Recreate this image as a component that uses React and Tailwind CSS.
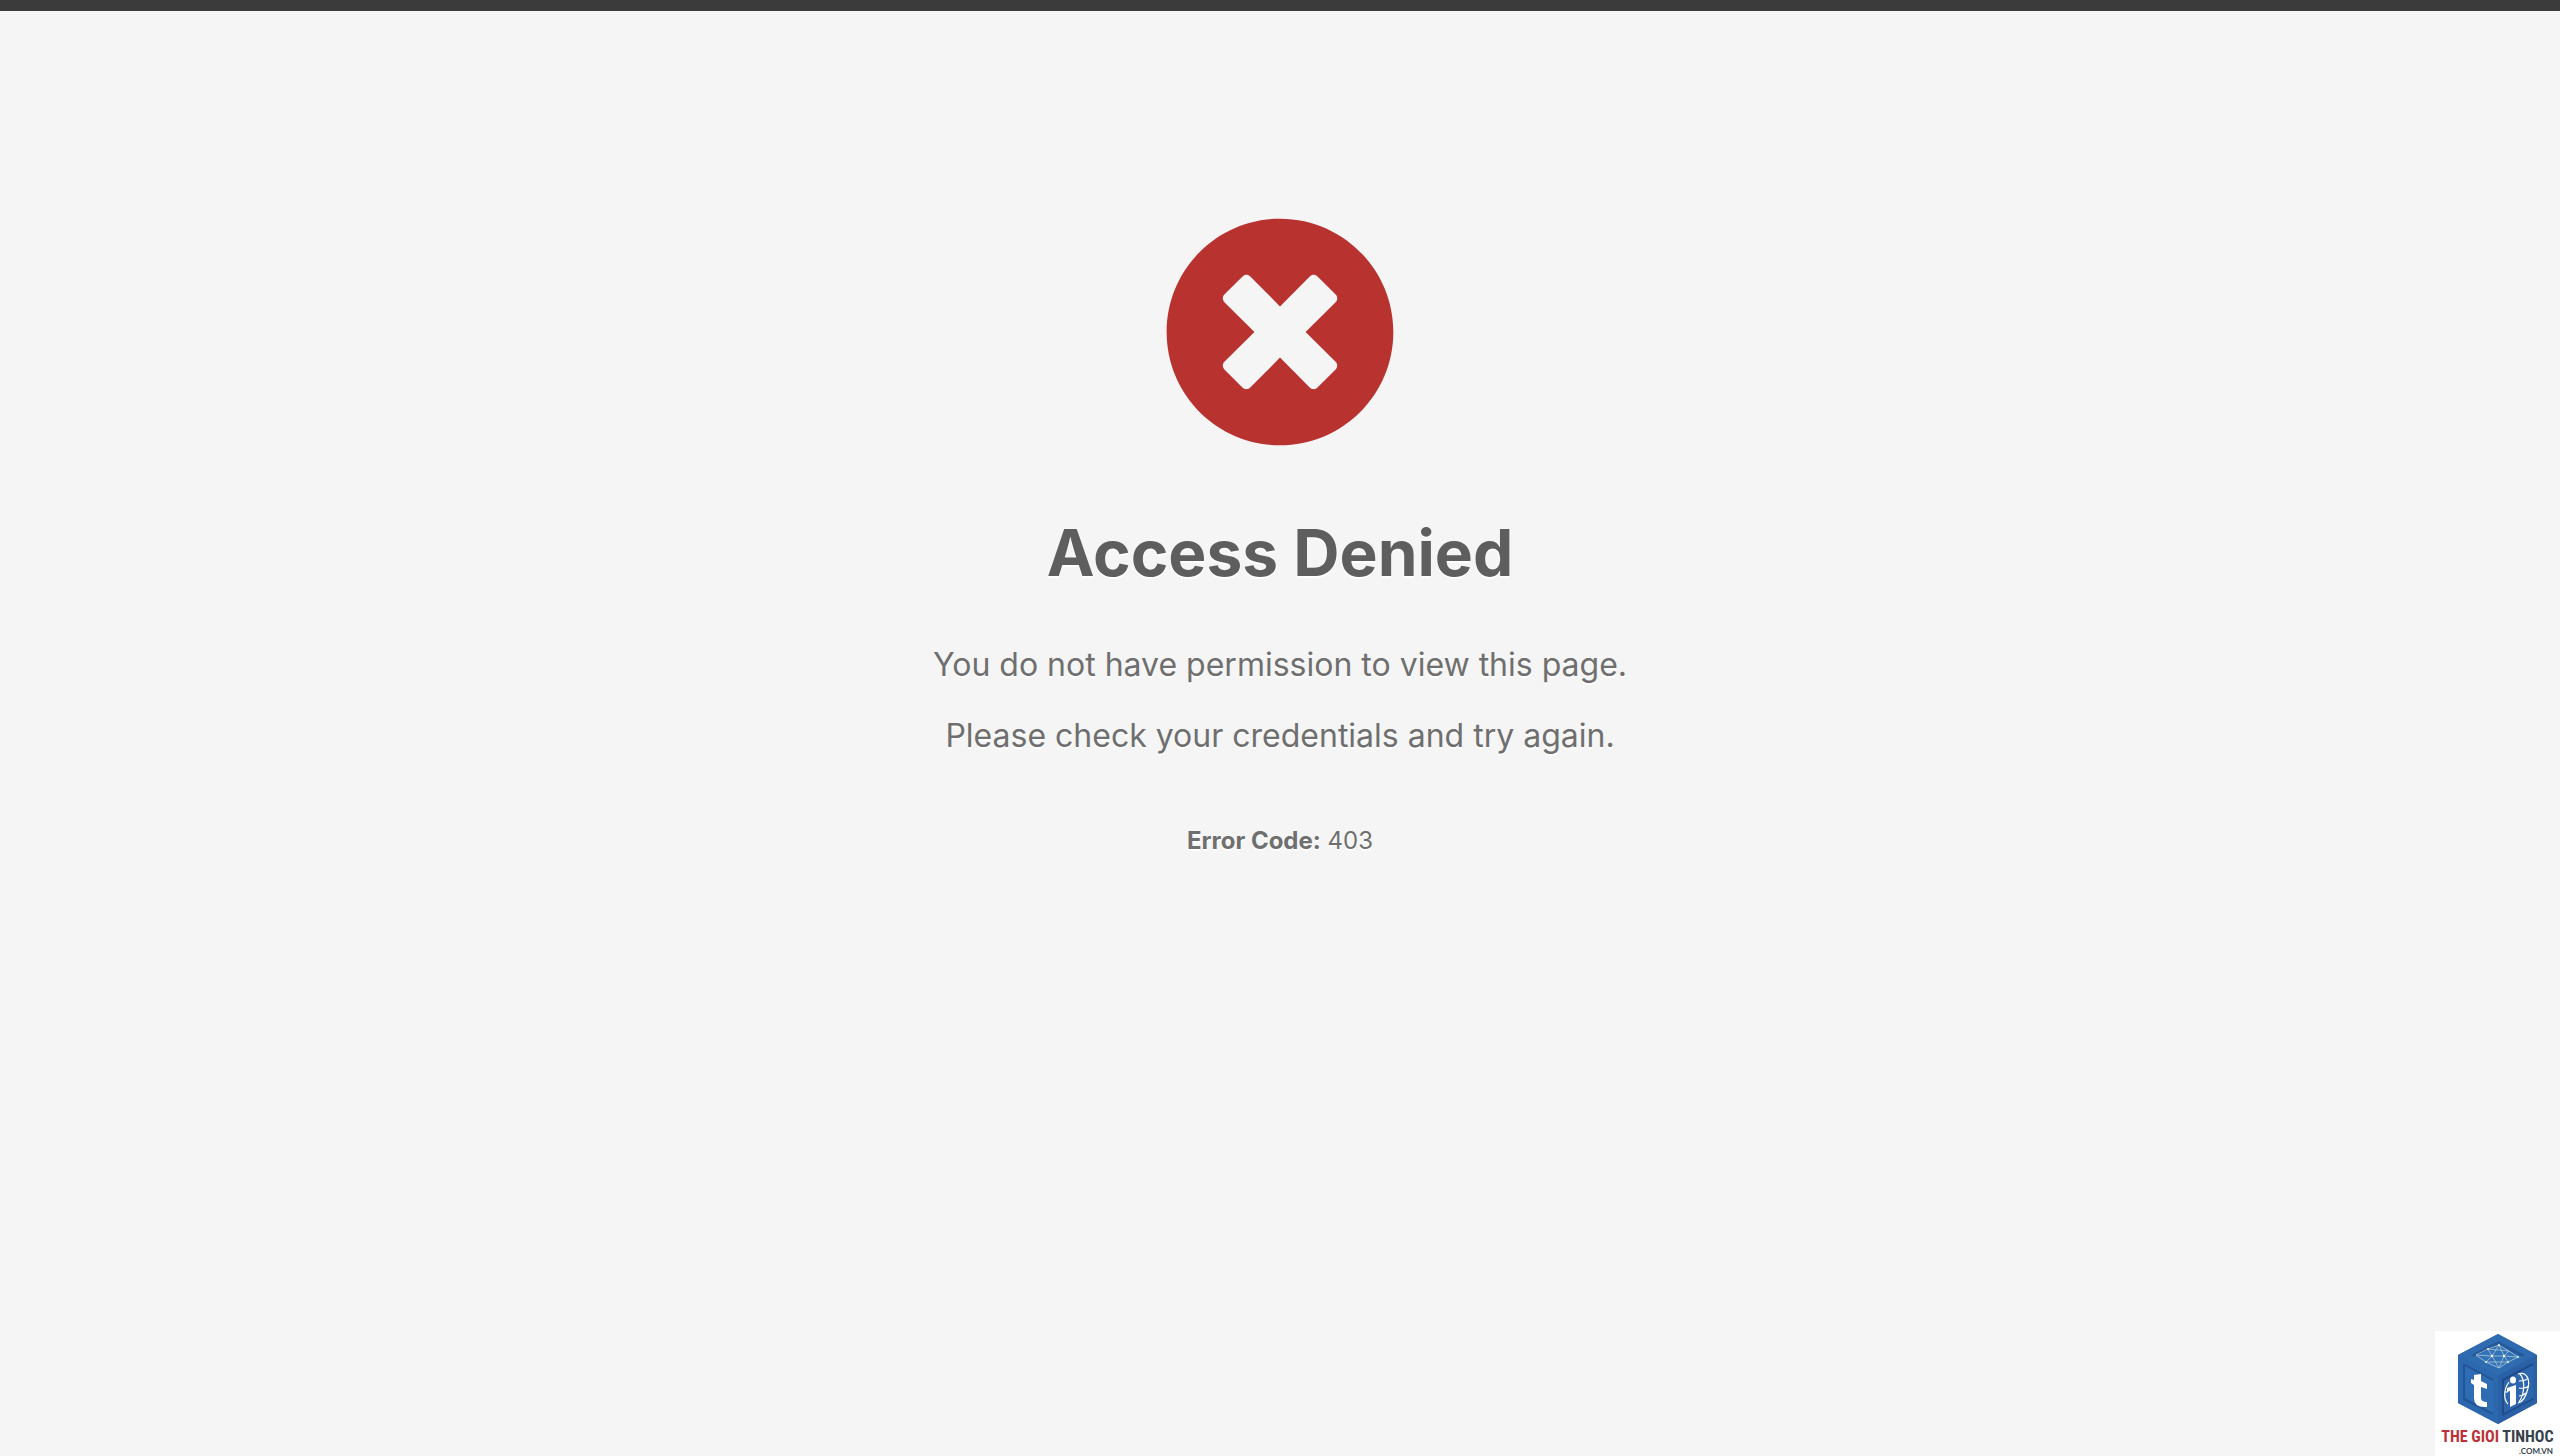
import { FaTimesCircle } from "react-icons/fa";

function Cube() {
  return (
    <svg viewBox="0 0 125 96" className="block w-full" aria-hidden="true">
      <polygon points="63,3 102,24 102,72 63,93 23,72 23,24" fill="#2563ad" />
      <polygon points="63,3 102,24 63,45 23,24" fill="#2f6bb0" />
      <polygon points="63,10 90,24 63,38 36,24" fill="#245a9c" />
      <polygon points="63,14 87,26 63,38 39,26" fill="#3273b8" />
      <polygon points="23,24 63,45 63,93 23,72" fill="#2c68ae" />
      <polygon points="28,32 58,48 58,84 28,69" fill="#235596" />
      <polygon points="30,35 58,50 58,82 30,67" fill="#2e6cb3" />
      <polygon points="63,45 102,24 102,72 63,93" fill="#2a60a6" />
      <polygon points="67,48 98,32 98,69 67,85" fill="#1f4c8b" />
      <polygon points="69,50 98,34 98,67 69,82" fill="#2d66ad" />
      <path
        d="M41 24L53 18L64 14L74 20L83 26L73 31L64 37L51 31ZM53 18L57 25L51 31L73 31L69 25L57 25L41 24M64 14L57 25L64 37L69 25L83 26M64 14L69 25L74 20L53 18"
        fill="none"
        stroke="#b9cfd9"
        strokeWidth="0.7"
      />
      <g fill="#f4f1d8">
        <circle cx="53" cy="18" r="1" />
        <circle cx="64" cy="14" r="1" />
        <circle cx="57" cy="25" r="1.2" />
        <circle cx="69" cy="25" r="1.2" />
        <circle cx="83" cy="26" r="1" />
        <circle cx="73" cy="31" r="1" />
        <circle cx="51" cy="31" r="1" />
      </g>
      <path d="M39 44L46 43V50L52 53V58L46 56V67Q46 71 52 71V76Q39 77 39 67V54L36 52V48L39 49Z" fill="#fff" />
      <g fill="none" stroke="#fff" strokeWidth="1.2">
        <path d="M83 43C92 40 95 49 93 57C91 66 87 71 83 72M74 51C69 58 68 68 73 73" />
        <path d="M85 43C91 50 89 64 84 71M84 50Q91 50 93 47M84 57Q90 58 94 55M84 65Q88 65 91 62M70 61H73" />
      </g>
      <path d="M72 57L81 54V73L75 76V60L72 61Z" fill="#fff" />
      <ellipse cx="78" cy="49" rx="3" ry="3.6" fill="#fff" />
    </svg>
  );
}

export default function App() {
  return (
    <div className="flex min-h-screen flex-col border-t-[11px] border-[#3b3b3b] bg-[#f5f5f5] font-['Inter',sans-serif] text-[#6f6f6f]">
      <main className="flex flex-col items-center px-6 pt-[204px] text-center [text-shadow:0_2px_0_#fff]">
        <FaTimesCircle className="size-[234px] text-[#b8322f]" aria-hidden="true" />
        <h1 className="mt-[62px] text-[64px] leading-[84px] font-bold text-[#5e5e5e]">Access Denied</h1>
        <div className="mt-[34px] text-[32px] leading-[71px]">
          <p>You do not have permission to view this page.</p>
          <p>Please check your credentials and try again.</p>
        </div>
        <p className="mt-[52px] text-[24px] leading-9">
          <strong className="font-bold">Error Code:</strong> 403
        </p>
      </main>
      <div className="fixed right-0 bottom-0 w-[125px] bg-white whitespace-nowrap">
        <Cube />
        <p className="text-center font-['Roboto_Condensed','Roboto',sans-serif] text-[16px] leading-5 font-bold text-[#36424c]">
          <span className="text-[#bb3239]">THE GIOI</span> TINHOC
        </p>
        <p className="pr-[7px] text-right font-['Lato',sans-serif] text-[8px] leading-[9px] font-bold text-[#36424c]">.COM.VN</p>
      </div>
    </div>
  );
}
